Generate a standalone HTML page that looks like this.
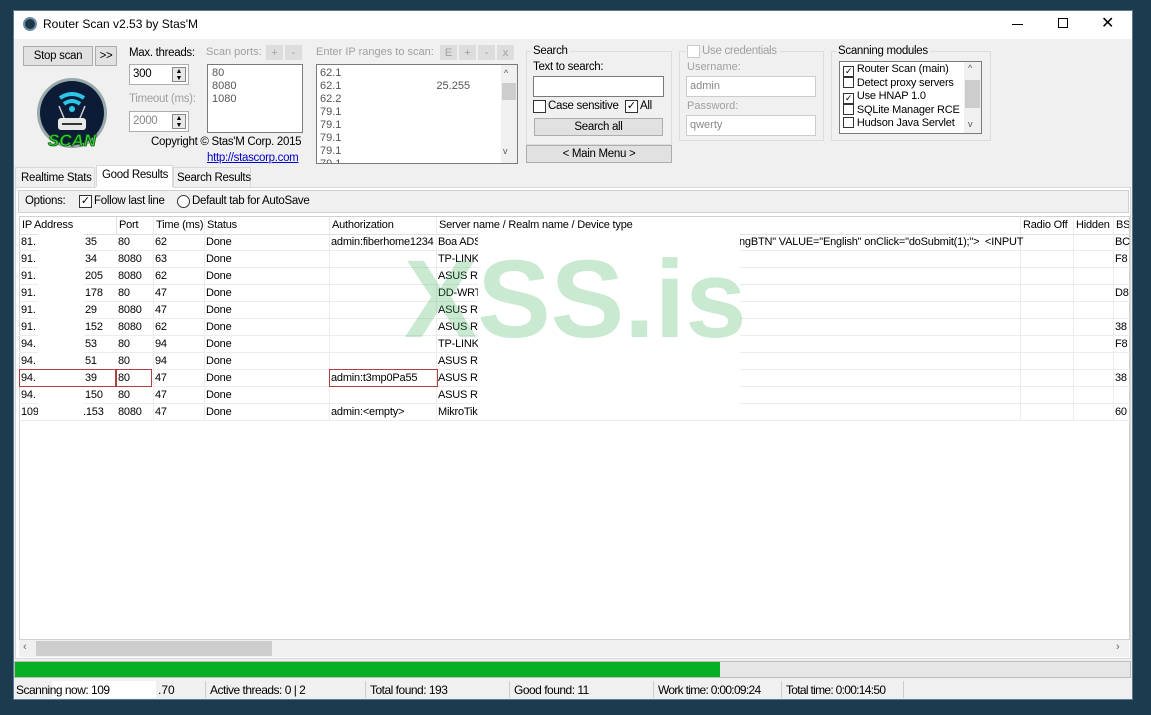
<!DOCTYPE html>
<html><head><meta charset="utf-8"><style>
*{margin:0;padding:0;box-sizing:border-box}
body{width:1151px;height:715px;overflow:hidden;background:#1d3b4f;font-family:"Liberation Sans",sans-serif;font-size:11px;color:#000;position:relative}
.a{position:absolute}
.win{left:13px;top:10px;width:1120px;height:690px;background:#f0f0f0;border:1px solid #5a7a90}
.t{white-space:nowrap}
.l{font-size:11.5px;letter-spacing:-0.3px}
.btn{background:#e1e1e1;border:1px solid #adadad;text-align:center}
.inp{background:#fff;border:1px solid #abadb3}
.gray{color:#a0a0a0}
.grp{border:1px solid #dcdcdc}
.cb{width:13px;height:13px;border:1px solid #333;background:#fff}
.tbl .r{position:absolute;left:0;width:1111px;height:17px;border-bottom:1px solid #ececec}
.tbl .c{position:absolute;top:2px;white-space:nowrap;letter-spacing:-0.2px}
.vl{position:absolute;top:0;width:1px;background:#ececec}
</style></head><body>
<div class="a win"></div>
<div class="a" style="left:14px;top:11px;width:1118px;height:28px;background:#fff"></div>
<div class="a" style="left:23px;top:17px;width:14px;height:14px;border-radius:50%;background:#1f3848;border:2px solid #6b8ea6"></div>
<div class="a t" style="left:43px;top:17px;font-size:12px">Router Scan v2.53 by Stas'M</div>
<div class="a" style="left:1012px;top:24px;width:11px;height:1px;background:#000"></div>
<div class="a" style="left:1058px;top:18px;width:10px;height:10px;border:1px solid #000"></div>
<div class="a t" style="left:1101px;top:13px;font-size:16px">✕</div>

<div class="a btn t l" style="left:23px;top:46px;width:70px;height:20px;line-height:18px">Stop scan</div>
<div class="a btn t l" style="left:95px;top:46px;width:22px;height:20px;line-height:18px">&gt;&gt;</div>
<svg class="a" style="left:34px;top:76px" width="76" height="74" viewBox="0 0 76 74">
<circle cx="38" cy="37" r="35" fill="#9aa" /><circle cx="38" cy="37" r="32" fill="#0c1c36"/>
<path d="M26 22 Q38 14 50 22" stroke="#2bc6e8" stroke-width="4" fill="none"/>
<path d="M30 28 Q38 22 46 28" stroke="#2bc6e8" stroke-width="4" fill="none"/>
<circle cx="38" cy="33" r="3" fill="#2bc6e8"/>
<path d="M25 30 L30 42 M51 30 L46 42" stroke="#ccc" stroke-width="1.5"/>
<rect x="24" y="42" width="28" height="12" rx="3" fill="#e8e8e8"/><rect x="28" y="47" width="20" height="2" fill="#333"/>
<text x="38" y="70" text-anchor="middle" font-family="Liberation Sans" font-weight="bold" font-style="italic" font-size="17" fill="#3bd23b" stroke="#0a5a0a" stroke-width="0.8">SCAN</text>
</svg>
<div class="a t l" style="left:129px;top:47px">Max. threads:</div>
<div class="a inp t l" style="left:129px;top:64px;width:60px;height:21px;padding:3px 3px">300</div>
<div class="a" style="left:172px;top:67px;width:14px;height:15px;border:1px solid #888;background:#e8e8e8;font-size:7px;line-height:7px;text-align:center">▲<br>▼</div>
<div class="a t gray l" style="left:129px;top:93px">Timeout (ms):</div>
<div class="a inp t l" style="left:129px;top:111px;width:60px;height:21px;padding:3px 3px;color:#888">2000</div>
<div class="a" style="left:172px;top:114px;width:14px;height:15px;border:1px solid #888;background:#e8e8e8;font-size:7px;line-height:7px;text-align:center">▲<br>▼</div>
<div class="a t gray" style="left:206px;top:46px">Scan ports:</div>
<div class="a btn gray" style="left:266px;top:45px;width:17px;height:15px;background:#ddd;border-color:#ddd;line-height:14px">+</div>
<div class="a btn gray" style="left:285px;top:45px;width:17px;height:15px;background:#ddd;border-color:#ddd;line-height:14px">-</div>
<div class="a inp" style="left:207px;top:64px;width:96px;height:69px;border-color:#7a7a7a;color:#555;padding:2px 4px;line-height:13px">80<br>8080<br>1080</div>
<div class="a t l" style="left:151px;top:136px">Copyright © Stas'M Corp. 2015</div>
<div class="a t l" style="left:207px;top:152px;color:#00c;text-decoration:underline">http://stascorp.com</div>
<div class="a t gray" style="left:316px;top:46px">Enter IP ranges to scan:</div>
<div class="a btn gray" style="left:440px;top:45px;width:17px;height:15px;background:#ddd;border-color:#ddd;line-height:14px">E</div>
<div class="a btn gray" style="left:459px;top:45px;width:17px;height:15px;background:#ddd;border-color:#ddd;line-height:14px">+</div>
<div class="a btn gray" style="left:478px;top:45px;width:17px;height:15px;background:#ddd;border-color:#ddd;line-height:14px">-</div>
<div class="a btn gray" style="left:497px;top:45px;width:17px;height:15px;background:#ddd;border-color:#ddd;line-height:14px">x</div>
<div class="a inp" style="left:316px;top:64px;width:202px;height:100px;border-color:#7a7a7a;color:#555;padding:2px 3px;line-height:13px;overflow:hidden;font-size:11px">62.1<br>62.1<span style="margin-left:95px">25.255</span><br>62.2<br>79.1<br>79.1<br>79.1<br>79.1<br>79.1</div>
<div class="a" style="left:501px;top:65px;width:16px;height:98px;background:#f0f0f0"></div>
<div class="a" style="left:502px;top:83px;width:14px;height:17px;background:#cdcdcd"></div>
<div class="a" style="left:504px;top:68px;font-size:9px;color:#555">^</div>
<div class="a" style="left:503px;top:146px;font-size:9px;color:#555">v</div>

<div class="a grp" style="left:526px;top:51px;width:146px;height:94px"></div>
<div class="a t l" style="left:531px;top:45px;background:#f0f0f0;padding:0 2px">Search</div>
<div class="a t l" style="left:533px;top:61px">Text to search:</div>
<div class="a inp" style="left:533px;top:76px;width:131px;height:21px;border-color:#7a7a7a"></div>
<div class="a cb" style="left:533px;top:100px"></div>
<div class="a t l" style="left:548px;top:100px">Case sensitive</div>
<div class="a cb" style="left:625px;top:100px;font-size:11px;line-height:10px;text-align:center">✓</div>
<div class="a t l" style="left:640px;top:100px">All</div>
<div class="a btn l" style="left:534px;top:118px;width:129px;height:18px;line-height:16px">Search all</div>
<div class="a btn l" style="left:526px;top:145px;width:146px;height:18px;line-height:16px">&lt; Main Menu &gt;</div>

<div class="a grp" style="left:679px;top:51px;width:145px;height:90px"></div>
<div class="a" style="left:686px;top:45px;width:15px;height:13px;background:#f0f0f0"></div>
<div class="a cb" style="left:687px;top:45px;border-color:#ccc"></div>
<div class="a t gray l" style="left:702px;top:45px;background:#f0f0f0;padding-right:3px">Use credentials</div>
<div class="a t gray" style="left:687px;top:61px">Username:</div>
<div class="a inp gray" style="left:686px;top:76px;width:130px;height:21px;border-color:#ccc;padding:3px;color:#888">admin</div>
<div class="a t gray" style="left:687px;top:100px">Password:</div>
<div class="a inp gray" style="left:686px;top:115px;width:130px;height:21px;border-color:#ccc;padding:3px;color:#888">qwerty</div>

<div class="a grp" style="left:831px;top:51px;width:160px;height:90px"></div>
<div class="a t l" style="left:836px;top:45px;background:#f0f0f0;padding:0 2px">Scanning modules</div>
<div class="a inp" style="left:839px;top:61px;width:143px;height:73px;border-color:#7a7a7a;overflow:hidden"></div>
<div class="a" style="left:964px;top:62px;width:17px;height:71px;background:#f0f0f0"></div>
<div class="a" style="left:965px;top:80px;width:15px;height:28px;background:#cdcdcd"></div>
<div class="a" style="left:968px;top:63px;font-size:9px;color:#555">^</div>
<div class="a" style="left:968px;top:119px;font-size:9px;color:#555">v</div>
<div class="a" style="left:843px;top:63px;line-height:13px;font-size:11px;letter-spacing:-0.2px">
<div><span style="display:inline-block;width:11px;height:11px;border:1px solid #333;font-size:9px;line-height:9px;text-align:center;vertical-align:-2px">✓</span> Router Scan (main)</div>
<div><span style="display:inline-block;width:11px;height:11px;border:1px solid #333;vertical-align:-2px"></span> Detect proxy servers</div>
<div><span style="display:inline-block;width:11px;height:11px;border:1px solid #333;font-size:9px;line-height:9px;text-align:center;vertical-align:-2px">✓</span> Use HNAP 1.0</div>
<div><span style="display:inline-block;width:11px;height:11px;border:1px solid #333;vertical-align:-2px"></span> SQLite Manager RCE</div>
<div><span style="display:inline-block;width:11px;height:11px;border:1px solid #333;vertical-align:-2px"></span> Hudson Java Servlet</div>
</div>

<div class="a" style="left:15px;top:167px;width:80px;height:20px;border:1px solid #d9d9d9;border-bottom:none"></div>
<div class="a t l" style="left:21px;top:172px">Realtime Stats</div>
<div class="a" style="left:96px;top:165px;width:77px;height:23px;background:#fff;border:1px solid #d9d9d9;border-bottom:none"></div>
<div class="a t l" style="left:102px;top:169px">Good Results</div>
<div class="a" style="left:173px;top:167px;width:78px;height:20px;border:1px solid #d9d9d9;border-bottom:none"></div>
<div class="a t l" style="left:177px;top:172px">Search Results</div>
<div class="a" style="left:15px;top:187px;width:1116px;height:472px;background:#fff;border:1px solid #d9d9d9;border-top:none"></div>
<div class="a" style="left:15px;top:187px;width:81px;height:1px;background:#d9d9d9"></div>
<div class="a" style="left:173px;top:187px;width:958px;height:1px;background:#d9d9d9"></div>
<div class="a" style="left:18px;top:190px;width:1111px;height:23px;background:#f0f0f0;border:1px solid #d0d0d0"></div>
<div class="a t l" style="left:25px;top:195px">Options:</div>
<div class="a cb" style="left:79px;top:195px;font-size:11px;line-height:10px;text-align:center">✓</div>
<div class="a t l" style="left:94px;top:195px">Follow last line</div>
<div class="a" style="left:177px;top:195px;width:13px;height:13px;border:1px solid #333;border-radius:50%;background:#fff"></div>
<div class="a t l" style="left:192px;top:195px">Default tab for AutoSave</div>

<div class="a tbl" style="left:19px;top:216px;width:1111px;height:424px;background:#fff;border:1px solid #d0d0d0;overflow:hidden">
<div class="r" style="top:0;height:18px;border-bottom:1px solid #e0e0e0;font-size:11px">
<div class="c" style="left:2px">IP Address</div><div class="c" style="left:99px">Port</div><div class="c" style="left:136px">Time (ms)</div><div class="c" style="left:187px">Status</div><div class="c" style="left:312px">Authorization</div><div class="c" style="left:419px">Server name / Realm name / Device type</div><div class="c" style="left:1003px">Radio Off</div><div class="c" style="left:1056px">Hidden</div><div class="c" style="left:1096px">BS</div></div>
<div class="vl" style="left:96px;height:18px;background:#e0e0e0"></div><div class="vl" style="left:133px;height:203px"></div><div class="vl" style="left:184px;height:203px"></div><div class="vl" style="left:309px;height:203px"></div><div class="vl" style="left:416px;height:203px"></div><div class="vl" style="left:1000px;height:203px"></div><div class="vl" style="left:1053px;height:203px"></div><div class="vl" style="left:1093px;height:203px"></div>
</div>
<div class="a tbl" style="left:19px;top:217px;width:1111px;height:210px">
<div class="r" style="top:17px"><div class="c" style="left:2px">81.</div><div class="c" style="left:66px">35</div><div class="c" style="left:99px">80</div><div class="c" style="left:136px">62</div><div class="c" style="left:187px">Done</div><div class="c" style="left:312px">admin:fiberhome1234</div><div class="c" style="left:419px">Boa ADS</div><div class="c" style="left:720px">ngBTN" VALUE="English" onClick="doSubmit(1);"&gt; &nbsp;&lt;INPUT</div><div class="c" style="left:1096px">BC</div></div>
<div class="r" style="top:34px"><div class="c" style="left:2px">91.</div><div class="c" style="left:66px">34</div><div class="c" style="left:99px">8080</div><div class="c" style="left:136px">63</div><div class="c" style="left:187px">Done</div><div class="c" style="left:419px">TP-LINK</div><div class="c" style="left:1096px">F8</div></div>
<div class="r" style="top:51px"><div class="c" style="left:2px">91.</div><div class="c" style="left:66px">205</div><div class="c" style="left:99px">8080</div><div class="c" style="left:136px">62</div><div class="c" style="left:187px">Done</div><div class="c" style="left:419px">ASUS RT</div></div>
<div class="r" style="top:68px"><div class="c" style="left:2px">91.</div><div class="c" style="left:66px">178</div><div class="c" style="left:99px">80</div><div class="c" style="left:136px">47</div><div class="c" style="left:187px">Done</div><div class="c" style="left:419px">DD-WRT</div><div class="c" style="left:1096px">D8</div></div>
<div class="r" style="top:85px"><div class="c" style="left:2px">91.</div><div class="c" style="left:66px">29</div><div class="c" style="left:99px">8080</div><div class="c" style="left:136px">47</div><div class="c" style="left:187px">Done</div><div class="c" style="left:419px">ASUS RT</div></div>
<div class="r" style="top:102px"><div class="c" style="left:2px">91.</div><div class="c" style="left:66px">152</div><div class="c" style="left:99px">8080</div><div class="c" style="left:136px">62</div><div class="c" style="left:187px">Done</div><div class="c" style="left:419px">ASUS RT</div><div class="c" style="left:1096px">38</div></div>
<div class="r" style="top:119px"><div class="c" style="left:2px">94.</div><div class="c" style="left:66px">53</div><div class="c" style="left:99px">80</div><div class="c" style="left:136px">94</div><div class="c" style="left:187px">Done</div><div class="c" style="left:419px">TP-LINK</div><div class="c" style="left:1096px">F8</div></div>
<div class="r" style="top:136px"><div class="c" style="left:2px">94.</div><div class="c" style="left:66px">51</div><div class="c" style="left:99px">80</div><div class="c" style="left:136px">94</div><div class="c" style="left:187px">Done</div><div class="c" style="left:419px">ASUS RT</div></div>
<div class="r" style="top:153px"><div class="c" style="left:2px">94.</div><div class="c" style="left:66px">39</div><div class="c" style="left:99px">80</div><div class="c" style="left:136px">47</div><div class="c" style="left:187px">Done</div><div class="c" style="left:312px">admin:t3mp0Pa55</div><div class="c" style="left:419px">ASUS RT</div><div class="c" style="left:1096px">38</div></div>
<div class="r" style="top:170px"><div class="c" style="left:2px">94.</div><div class="c" style="left:66px">150</div><div class="c" style="left:99px">80</div><div class="c" style="left:136px">47</div><div class="c" style="left:187px">Done</div><div class="c" style="left:419px">ASUS RT</div></div>
<div class="r" style="top:187px"><div class="c" style="left:2px">109</div><div class="c" style="left:64px">.153</div><div class="c" style="left:99px">8080</div><div class="c" style="left:136px">47</div><div class="c" style="left:187px">Done</div><div class="c" style="left:312px">admin:&lt;empty&gt;</div><div class="c" style="left:419px">MikroTik</div><div class="c" style="left:1096px">60</div></div>
</div>
<div class="a" style="left:478px;top:234px;width:262px;height:186px;background:#fff"></div>
<div class="a" style="left:38px;top:234px;width:46px;height:186px;background:#fff"></div>
<div class="a" style="left:19px;top:369px;width:97px;height:18px;border:1px solid #b04040"></div>
<div class="a" style="left:116px;top:369px;width:36px;height:18px;border:1px solid #b04040"></div>
<div class="a" style="left:329px;top:369px;width:109px;height:18px;border:1px solid #b04040"></div>
<div class="a t" style="left:404px;top:245px;font-size:110px;line-height:110px;font-weight:bold;color:rgba(60,175,90,0.28);letter-spacing:0px">XSS.is</div>

<div class="a" style="left:19px;top:640px;width:1110px;height:17px;background:#f0f0f0"></div>
<div class="a" style="left:36px;top:641px;width:236px;height:15px;background:#cdcdcd"></div>
<div class="a" style="left:23px;top:641px;font-size:11px;color:#666">‹</div>
<div class="a" style="left:1116px;top:641px;font-size:11px;color:#666">›</div>

<div class="a" style="left:14px;top:661px;width:1117px;height:17px;background:#e6e6e6;border:1px solid #bcbcbc"></div>
<div class="a" style="left:15px;top:662px;width:705px;height:15px;background:#06b025"></div>
<div class="a" style="left:14px;top:680px;width:1117px;height:19px;background:#f0f0f0"></div>
<div class="a" style="left:52px;top:681px;width:104px;height:17px;background:#fff"></div>
<div class="a t" style="left:16px;top:683px;font-size:12px;letter-spacing:-0.5px">Scanning now: 109</div>
<div class="a t" style="left:158px;top:683px;font-size:12px">.70</div>
<div class="a" style="left:205px;top:681px;width:1px;height:17px;background:#ccc"></div>
<div class="a t" style="left:210px;top:683px;font-size:12px;letter-spacing:-0.5px">Active threads: 0 | 2</div>
<div class="a" style="left:365px;top:681px;width:1px;height:17px;background:#ccc"></div>
<div class="a t" style="left:370px;top:683px;font-size:12px;letter-spacing:-0.5px">Total found: 193</div>
<div class="a" style="left:509px;top:681px;width:1px;height:17px;background:#ccc"></div>
<div class="a t" style="left:514px;top:683px;font-size:12px;letter-spacing:-0.5px">Good found: 11</div>
<div class="a" style="left:653px;top:681px;width:1px;height:17px;background:#ccc"></div>
<div class="a t" style="left:658px;top:683px;font-size:12px;letter-spacing:-0.7px">Work time: 0:00:09:24</div>
<div class="a" style="left:781px;top:681px;width:1px;height:17px;background:#ccc"></div>
<div class="a t" style="left:786px;top:683px;font-size:12px;letter-spacing:-0.7px">Total time: 0:00:14:50</div>
<div class="a" style="left:903px;top:681px;width:1px;height:17px;background:#ccc"></div>
</body></html>
